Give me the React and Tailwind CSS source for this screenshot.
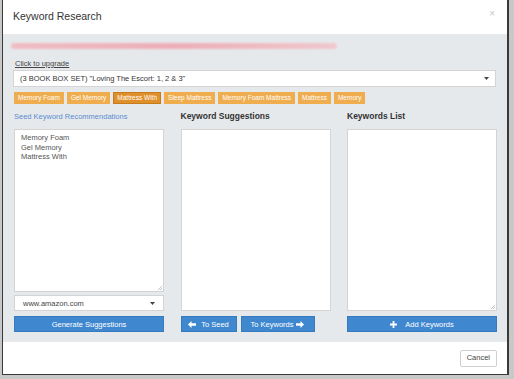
import React from "react";

const tags = [
  { label: "Memory Foam", active: false },
  { label: "Gel Memory", active: false },
  { label: "Mattress With", active: true },
  { label: "Sleep Mattress", active: false },
  { label: "Memory Foam Mattress", active: false },
  { label: "Mattress", active: false },
  { label: "Memory", active: false }
];

const Caret = () => (
  <svg width="5" height="3" viewBox="0 0 5 3" className="fill-[#444]">
    <path d="M0 0h5L2.5 3z" />
  </svg>
);

const ArrowLeft = () => (
  <svg width="8" height="7" viewBox="0 0 8 7" className="fill-white">
    <path d="M0 3.5L3.5 0v2.3H8v2.4H3.5V7z" />
  </svg>
);

const ArrowRight = () => (
  <svg width="8" height="7" viewBox="0 0 8 7" className="fill-white">
    <path d="M8 3.5L4.5 0v2.3H0v2.4h4.5V7z" />
  </svg>
);

const Plus = () => (
  <svg width="7" height="7" viewBox="0 0 7 7" className="fill-white">
    <path d="M2.6 0h1.8v2.6H7v1.8H4.4V7H2.6V4.4H0V2.6h2.6z" />
  </svg>
);

const ResizeGrip = () => (
  <svg width="5" height="5" viewBox="0 0 5 5" className="absolute bottom-[1px] right-[1px] stroke-[#aaa]">
    <path d="M1 5L5 1M3 5L5 3" strokeWidth="0.7" />
  </svg>
);

const App = () => {
  return (
    <div className="w-[514px] h-[379px] bg-[#c8c8c8] font-['Liberation_Sans',Arial,sans-serif] text-[#333] overflow-hidden">
      <div className="ml-[2px] w-[507px] h-[375px] bg-white border-l border-r-2 border-b border-[#3a3a3a] flex flex-col">
        {/* header */}
        <div className="h-[34px] flex items-center justify-between pl-[10px] pr-[12px] shrink-0">
          <span className="text-[10.5px] text-[#333]">Keyword Research</span>
          <span className="text-[10px] text-[#c8c8c8] -mt-[8px]">×</span>
        </div>

        {/* body */}
        <div className="bg-[#e6e9ec] h-[308px] pl-[10px] pr-[11px] pt-[9px] shrink-0">
          <div className="h-[6px] w-[326px] -ml-[2px] rounded-full bg-gradient-to-r from-[#f2b3bb] via-[#efa0aa] to-[#f3c0c6] opacity-80 blur-[0.8px]" />
          <div className="mt-[9px] text-[7.5px] underline text-[#444] pl-[2px]">Click to upgrade</div>

          <div className="mt-[1px] h-[17px] bg-white border border-[#d4d4d4] flex items-center justify-between px-[6px]">
            <span className="text-[7.5px] text-[#333]">(3 BOOK BOX SET) "Loving The Escort: 1, 2 &amp; 3"</span>
            <Caret />
          </div>

          <div className="mt-[5px] ml-[1px] flex gap-[3px]">
            {tags.map((t) =>
              t.active ? (
                <span
                  key={t.label}
                  className="h-[12px] px-[3px] flex items-center text-[6.5px] text-white bg-[#e0902a] border border-[#c77b1c]"
                >
                  {t.label}
                </span>
              ) : (
                <span
                  key={t.label}
                  className="h-[12px] px-[3px] flex items-center text-[6.5px] text-white bg-[#f0ad4e] border border-[#f0ad4e]"
                >
                  {t.label}
                </span>
              )
            )}
          </div>

          <div className="mt-[5px] ml-[1px] w-[483px] grid grid-cols-[150px_150px_150px] justify-between">
            {/* left column */}
            <div className="flex flex-col">
              <div className="h-[14px] flex items-center text-[7.5px] text-[#5b8cd0]">Seed Keyword Recommendations</div>
              <div className="relative mt-[6px] h-[163px] bg-white border border-[#d4d4d4] px-[6px] py-[3px] text-[7.5px] leading-[9.5px] text-[#555]">
                <div>Memory Foam</div>
                <div>Gel Memory</div>
                <div>Mattress With</div>
                <ResizeGrip />
              </div>
              <div className="mt-[3px] h-[16px] bg-white border border-[#d4d4d4] flex items-center justify-between px-[8px]">
                <span className="text-[7.5px] text-[#444]">www.amazon.com</span>
                <Caret />
              </div>
              <button className="mt-[5px] h-[16px] bg-[#3f88cf] border border-[#357bbd] text-white text-[7.5px] flex items-center justify-center">
                Generate Suggestions
              </button>
            </div>

            {/* middle column */}
            <div className="flex flex-col">
              <div className="h-[14px] flex items-center text-[8.5px] font-bold text-[#333]">Keyword Suggestions</div>
              <div className="mt-[6px] h-[182px] bg-white border border-[#d4d4d4]" />
              <div className="mt-[5px] flex gap-[4px]">
                <button className="h-[16px] w-[56px] bg-[#3f88cf] border border-[#357bbd] text-white text-[7.5px] flex items-center justify-center gap-[5px]">
                  <ArrowLeft />
                  To Seed
                </button>
                <button className="h-[16px] w-[74px] bg-[#3f88cf] border border-[#357bbd] text-white text-[7.5px] flex items-center justify-center gap-[3px]">
                  To Keywords
                  <ArrowRight />
                </button>
              </div>
            </div>

            {/* right column */}
            <div className="flex flex-col">
              <div className="h-[14px] flex items-center text-[8.5px] font-bold text-[#333]">Keywords List</div>
              <div className="relative mt-[6px] h-[182px] bg-white border border-[#d4d4d4]">
                <ResizeGrip />
              </div>
              <button className="mt-[5px] h-[16px] bg-[#3f88cf] border border-[#357bbd] text-white text-[7.5px] flex items-center justify-center gap-[8px]">
                <Plus />
                Add Keywords
              </button>
            </div>
          </div>
        </div>

        {/* footer */}
        <div className="flex-1 flex items-center justify-end pr-[10px]">
          <button className="h-[17px] px-[6px] bg-white border border-[#d0d0d0] rounded-[2px] text-[7.5px] text-[#444]">
            Cancel
          </button>
        </div>
      </div>
    </div>
  );
};

export default App;
